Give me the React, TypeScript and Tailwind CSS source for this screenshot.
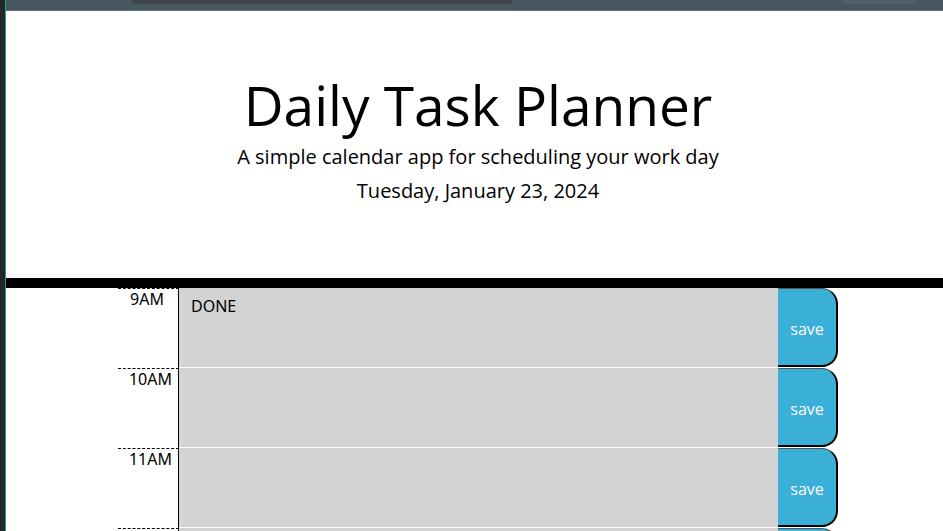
const hours = ["9AM", "10AM", "11AM", "12PM", "1PM", "2PM", "3PM", "4PM", "5PM"];

const notes: Record<string, string> = {
  "9AM": "DONE",
};

function HourRow({ hour }: { hour: string }) {
  return (
    <div className="flex h-[80px]">
      <div
        className={
          hour === "9AM"
            ? "w-[61px] border-t border-r border-dashed border-black pr-[14px] pt-[2px] text-right text-[16px] leading-none text-black"
            : "w-[61px] border-t border-r border-dashed border-black pr-[6px] pt-[2px] text-right text-[16px] leading-none text-black"
        }
        style={{ borderRightStyle: "solid", fontFamily: "'Noto Sans', sans-serif" }}
      >
        {hour}
      </div>
      <textarea
        defaultValue={notes[hour] ?? ""}
        className="h-full w-[599px] resize-none border-b border-white bg-[#d3d3d3] px-[12px] pt-[6px] text-[16px] leading-6 text-black outline-none"
        style={{ fontFamily: "'Noto Sans', sans-serif" }}
      />
      <button
        type="button"
        className="h-[79px] w-[60px] rounded-r-[16px] border-t border-r-2 border-b-2 border-t-[#555] border-r-black border-b-black bg-[#3aafd8] pt-[3px] text-[16px] text-white"
        style={{ fontFamily: "'Open Sans', sans-serif" }}
      >
        save
      </button>
    </div>
  );
}

export default function App() {
  return (
    <div className="flex h-screen overflow-hidden bg-white">
      <div className="w-[6px] shrink-0 border-r border-[#1b9e98] bg-[#262628]" />
      <div className="flex min-w-0 flex-1 flex-col">
        <div className="relative h-[11px] shrink-0 border-b border-[#62727a] bg-[#46575f]">
          <div className="absolute left-[126px] top-0 h-[4px] w-[380px] rounded-b-[8px] bg-[#3b464d]" />
          <div className="absolute left-[836px] top-0 h-[4px] w-[74px] rounded-b-[6px] bg-[#516169]" />
        </div>

        <header
          className="h-[277px] shrink-0 border-b-[10px] border-black text-center text-black"
          style={{ fontFamily: "'Open Sans', sans-serif" }}
        >
          <div className="ml-[112px] w-[720px] pt-[57px]">
            <h1 className="text-[55px] font-normal leading-[74px]">Daily Task Planner</h1>
            <p className="text-[20px] leading-[30px]">
              A simple calendar app for scheduling your work day
            </p>
            <p className="mt-[4px] text-[20px] leading-[30px]">Tuesday, January 23, 2024</p>
          </div>
        </header>

        <div className="ml-[112px] w-[720px]">
          {hours.map((hour) => (
            <HourRow key={hour} hour={hour} />
          ))}
        </div>
      </div>
    </div>
  );
}
